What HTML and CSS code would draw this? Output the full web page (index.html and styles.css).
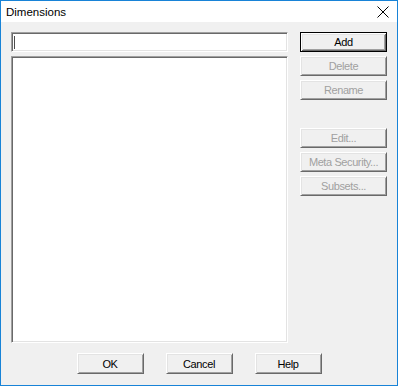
FILE: index.html
```html
<!doctype html>
<html>
<head>
<title>Dimensions</title>
<link rel="stylesheet" href="styles.css">
</head>
<body>
<div class="window">
  <div class="titlebar">
    <span class="title">Dimensions</span>
    <svg class="close" width="12" height="12" viewBox="0 0 12 12">
      <path d="M0.5 0.5 L11.5 11.5 M11.5 0.5 L0.5 11.5" stroke="#000" stroke-width="1" fill="none"/>
    </svg>
  </div>
  <div class="client">
    <div class="main">
      <div class="leftcol">
        <div class="edit"><span class="caret"></span></div>
        <div class="listbox"></div>
      </div>
      <div class="btncol">
        <button class="btn default">Add</button>
        <button class="btn" disabled>Delete</button>
        <button class="btn" disabled>Rename</button>
        <div class="spacer"></div>
        <button class="btn" disabled>Edit...</button>
        <button class="btn" disabled>Meta Security...</button>
        <button class="btn" disabled>Subsets...</button>
      </div>
    </div>
    <div class="bottom">
      <button class="btn wide">OK</button>
      <button class="btn wide">Cancel</button>
      <button class="btn wide">Help</button>
    </div>
  </div>
</div>
</body>
</html>
```

FILE: styles.css
```css
html, body {
	margin: 0;
	padding: 0;
	background: #f0f0f0;
}
.window {
	width: 398px;
	height: 386px;
	box-sizing: border-box;
	border: 1px solid #1883d7;
	display: flex;
	flex-direction: column;
	font-family: "Liberation Sans", Arial, sans-serif;
}
.titlebar {
	height: 22px;
	background: #fff;
	display: flex;
	align-items: center;
	justify-content: space-between;
	padding: 0 8px 0 5px;
}
.title {
	font-size: 11.5px;
	color: #000;
}
.close {
	display: block;
	margin-top: 1px;
}
.client {
	flex: 1;
	background: #f0f0f0;
	padding: 10px 10px 11px 10px;
	display: flex;
	flex-direction: column;
}
.main {
	display: flex;
	gap: 12px;
	height: 311px;
}
.leftcol {
	width: 277px;
	display: flex;
	flex-direction: column;
	gap: 4px;
}
.edit, .listbox {
	box-sizing: border-box;
	background: #fff;
	border: 1px solid;
	border-color: #a0a0a0 #fff #fff #a0a0a0;
	box-shadow: inset 1px 1px #696969, inset -1px -1px #e3e3e3;
}
.edit {
	height: 20px;
	padding: 3px 0 0 2px;
}
.caret {
	display: block;
	width: 1px;
	height: 13px;
	background: #000;
	opacity: 0.7;
}
.listbox {
	flex: 1;
}
.btncol {
	width: 87px;
	display: flex;
	flex-direction: column;
	gap: 4px;
}
.spacer {
	height: 20px;
}
.btn {
	box-sizing: border-box;
	height: 20px;
	width: 87px;
	margin: 0;
	padding: 0;
	background: #f0f0f0;
	font-family: "Liberation Sans", Arial, sans-serif;
	font-size: 11px;
	letter-spacing: -0.4px;
	color: #000;
	border: 1px solid;
	border-color: #fff #696969 #696969 #fff;
	box-shadow: inset 1px 1px #e3e3e3, inset -1px -1px #a0a0a0;
}
.btn:disabled {
	color: #a0a0a0;
}
.btn.default {
	border-color: #000;
	box-shadow: inset 1px 1px #fff, inset -1px -1px #696969, inset 2px 2px #e3e3e3, inset -2px -2px #a0a0a0;
}
.bottom {
	margin-top: 10px;
	display: flex;
	justify-content: center;
	gap: 22px;
}
.btn.wide {
	width: 67px;
	height: 21px;
}
```
